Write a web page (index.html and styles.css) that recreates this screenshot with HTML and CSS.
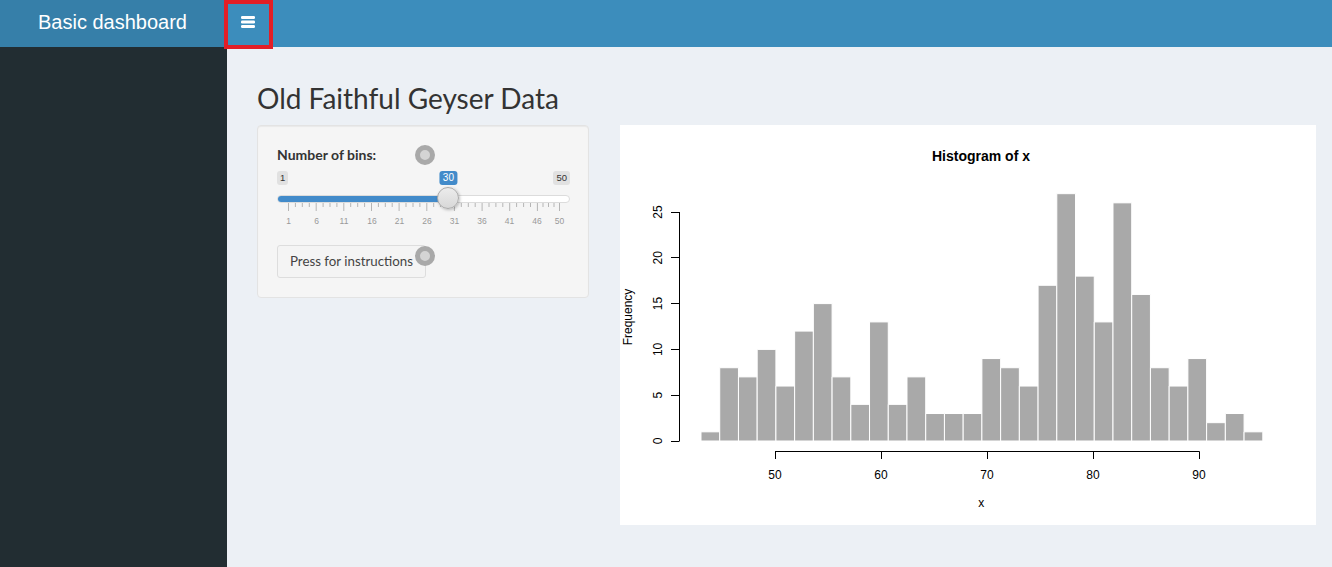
FILE: index.html
```html
<!DOCTYPE html>
<html lang="en">
<head>
<meta charset="utf-8">
<title>Basic dashboard</title>
<link rel="stylesheet" href="styles.css">
</head>
<body>
<div class="wrapper">
  <header class="main-header">
    <a class="logo" href="#">Basic dashboard</a>
    <nav class="navbar">
      <a class="sidebar-toggle" href="#" aria-label="Toggle navigation">
        <svg class="bars-icon" width="14" height="12" viewBox="0 0 14 12">
          <rect x="0" y="0" width="14" height="3" rx="1.2"/>
          <rect x="0" y="4.5" width="14" height="3" rx="1.2"/>
          <rect x="0" y="9" width="14" height="3" rx="1.2"/>
        </svg>
      </a>
    </nav>
    <span class="highlight-box"></span>
  </header>
  <div class="body-row">
    <aside class="main-sidebar"></aside>
    <main class="content-wrapper">
      <h2 class="page-title">Old Faithful Geyser Data</h2>
      <div class="row">
        <div class="well">
          <div class="form-group">
            <label class="control-label">Number of bins:</label>
            <div class="irs">
              <div class="irs-labels">
                <span class="irs-min">1</span>
                <span class="irs-max">50</span>
              </div>
              <span class="irs-single" style="left:171.4px">30</span>
              <div class="irs-line"><div class="irs-bar" style="width:171.4px"></div></div>
              <span class="irs-handle" style="left:160.4px"></span>
              <svg class="irs-grid" width="293" height="27" viewBox="0 0 293 27">
                <g class="grid-major">
                  <line x1="11.5" y1="0" x2="11.5" y2="8"/>
                  <line x1="39.2" y1="0" x2="39.2" y2="8"/>
                  <line x1="66.8" y1="0" x2="66.8" y2="8"/>
                  <line x1="94.5" y1="0" x2="94.5" y2="8"/>
                  <line x1="122.1" y1="0" x2="122.1" y2="8"/>
                  <line x1="149.8" y1="0" x2="149.8" y2="8"/>
                  <line x1="177.4" y1="0" x2="177.4" y2="8"/>
                  <line x1="205.1" y1="0" x2="205.1" y2="8"/>
                  <line x1="232.7" y1="0" x2="232.7" y2="8"/>
                  <line x1="260.4" y1="0" x2="260.4" y2="8"/>
                  <line x1="282.5" y1="0" x2="282.5" y2="8"/>
                </g>
                <g class="grid-minor">
                  <line x1="18.4" y1="0" x2="18.4" y2="4"/><line x1="25.3" y1="0" x2="25.3" y2="4"/><line x1="32.3" y1="0" x2="32.3" y2="4"/>
                  <line x1="46.1" y1="0" x2="46.1" y2="4"/><line x1="53" y1="0" x2="53" y2="4"/><line x1="59.9" y1="0" x2="59.9" y2="4"/>
                  <line x1="73.7" y1="0" x2="73.7" y2="4"/><line x1="80.7" y1="0" x2="80.7" y2="4"/><line x1="87.6" y1="0" x2="87.6" y2="4"/>
                  <line x1="101.4" y1="0" x2="101.4" y2="4"/><line x1="108.3" y1="0" x2="108.3" y2="4"/><line x1="115.2" y1="0" x2="115.2" y2="4"/>
                  <line x1="129" y1="0" x2="129" y2="4"/><line x1="136" y1="0" x2="136" y2="4"/><line x1="142.9" y1="0" x2="142.9" y2="4"/>
                  <line x1="156.7" y1="0" x2="156.7" y2="4"/><line x1="163.6" y1="0" x2="163.6" y2="4"/><line x1="170.5" y1="0" x2="170.5" y2="4"/>
                  <line x1="184.3" y1="0" x2="184.3" y2="4"/><line x1="191.3" y1="0" x2="191.3" y2="4"/><line x1="198.2" y1="0" x2="198.2" y2="4"/>
                  <line x1="212" y1="0" x2="212" y2="4"/><line x1="218.9" y1="0" x2="218.9" y2="4"/><line x1="225.8" y1="0" x2="225.8" y2="4"/>
                  <line x1="239.6" y1="0" x2="239.6" y2="4"/><line x1="246.6" y1="0" x2="246.6" y2="4"/><line x1="253.5" y1="0" x2="253.5" y2="4"/>
                  <line x1="266" y1="0" x2="266" y2="4"/><line x1="271.5" y1="0" x2="271.5" y2="4"/><line x1="277" y1="0" x2="277" y2="4"/>
                </g>
                <g class="grid-text">
                  <text x="11.5" y="21">1</text>
                  <text x="39.5" y="21">6</text>
                  <text x="67" y="21">11</text>
                  <text x="95" y="21">16</text>
                  <text x="122.5" y="21">21</text>
                  <text x="150" y="21">26</text>
                  <text x="177.5" y="21">31</text>
                  <text x="205" y="21">36</text>
                  <text x="232.5" y="21">41</text>
                  <text x="260" y="21">46</text>
                  <text x="282.5" y="21">50</text>
                </g>
              </svg>
            </div>
          </div>
          <button class="btn" type="button">Press for instructions</button>
          <span class="click-marker marker-a"></span>
          <span class="click-marker marker-b"></span>
        </div>
        <div class="plot-output">
          <svg class="hist" width="696" height="400" viewBox="0 0 696 400">
            <text class="plot-title" x="361" y="36">Histogram of x</text>
            <g class="bars" transform="translate(81,316) scale(10.6,-9.16)">
              <rect x="0" y="0" width="1.76667" height="1"/>
              <rect x="1.76667" y="0" width="1.76667" height="8"/>
              <rect x="3.53333" y="0" width="1.76667" height="7"/>
              <rect x="5.3" y="0" width="1.76667" height="10"/>
              <rect x="7.06667" y="0" width="1.76667" height="6"/>
              <rect x="8.83333" y="0" width="1.76667" height="12"/>
              <rect x="10.6" y="0" width="1.76667" height="15"/>
              <rect x="12.36667" y="0" width="1.76667" height="7"/>
              <rect x="14.13333" y="0" width="1.76667" height="4"/>
              <rect x="15.9" y="0" width="1.76667" height="13"/>
              <rect x="17.66667" y="0" width="1.76667" height="4"/>
              <rect x="19.43333" y="0" width="1.76667" height="7"/>
              <rect x="21.2" y="0" width="1.76667" height="3"/>
              <rect x="22.96667" y="0" width="1.76667" height="3"/>
              <rect x="24.73333" y="0" width="1.76667" height="3"/>
              <rect x="26.5" y="0" width="1.76667" height="9"/>
              <rect x="28.26667" y="0" width="1.76667" height="8"/>
              <rect x="30.03333" y="0" width="1.76667" height="6"/>
              <rect x="31.8" y="0" width="1.76667" height="17"/>
              <rect x="33.56667" y="0" width="1.76667" height="27"/>
              <rect x="35.33333" y="0" width="1.76667" height="18"/>
              <rect x="37.1" y="0" width="1.76667" height="13"/>
              <rect x="38.86667" y="0" width="1.76667" height="26"/>
              <rect x="40.63333" y="0" width="1.76667" height="16"/>
              <rect x="42.4" y="0" width="1.76667" height="8"/>
              <rect x="44.16667" y="0" width="1.76667" height="6"/>
              <rect x="45.93333" y="0" width="1.76667" height="9"/>
              <rect x="47.7" y="0" width="1.76667" height="2"/>
              <rect x="49.46667" y="0" width="1.76667" height="3"/>
              <rect x="51.23333" y="0" width="1.76667" height="1"/>
            </g>
            <g class="axis">
              <line x1="59.5" y1="316" x2="59.5" y2="87"/>
              <line x1="51" y1="316.5" x2="59.5" y2="316.5"/>
              <line x1="51" y1="270.5" x2="59.5" y2="270.5"/>
              <line x1="51" y1="224.5" x2="59.5" y2="224.5"/>
              <line x1="51" y1="178.5" x2="59.5" y2="178.5"/>
              <line x1="51" y1="132.5" x2="59.5" y2="132.5"/>
              <line x1="51" y1="87.5" x2="59.5" y2="87.5"/>
              <line x1="155" y1="326.5" x2="579.5" y2="326.5"/>
              <line x1="155.5" y1="326.5" x2="155.5" y2="334"/>
              <line x1="261.5" y1="326.5" x2="261.5" y2="334"/>
              <line x1="367.5" y1="326.5" x2="367.5" y2="334"/>
              <line x1="473.5" y1="326.5" x2="473.5" y2="334"/>
              <line x1="579.5" y1="326.5" x2="579.5" y2="334"/>
            </g>
            <g class="tick-text">
              <text transform="translate(42,316) rotate(-90)">0</text>
              <text transform="translate(42,270.2) rotate(-90)">5</text>
              <text transform="translate(42,224.4) rotate(-90)">10</text>
              <text transform="translate(42,178.6) rotate(-90)">15</text>
              <text transform="translate(42,132.8) rotate(-90)">20</text>
              <text transform="translate(42,87) rotate(-90)">25</text>
              <text x="155" y="353.5">50</text>
              <text x="261" y="353.5">60</text>
              <text x="367" y="353.5">70</text>
              <text x="473" y="353.5">80</text>
              <text x="579" y="353.5">90</text>
              <text x="361.3" y="382">x</text>
              <text transform="translate(12,192) rotate(-90)">Frequency</text>
            </g>
          </svg>
        </div>
      </div>
    </main>
  </div>
</div>
</body>
</html>
```
FILE: styles.css
```css
* { box-sizing: border-box; }

html, body {
  margin: 0;
  padding: 0;
  height: 100%;
}

body {
  font-family: Lato, "Noto Sans", sans-serif;
  color: #333;
  background: #ecf0f5;
  overflow: hidden;
}

.wrapper {
  display: flex;
  flex-direction: column;
  height: 567px;
}

.main-header {
  position: relative;
  display: flex;
  height: 47px;
  flex: none;
}

.logo {
  width: 227px;
  flex: none;
  background: #367fa9;
  color: #fff;
  font-family: "Liberation Sans", Arial, sans-serif;
  font-size: 20px;
  line-height: 44px;
  text-align: center;
  text-decoration: none;
  padding-right: 2px;
}

.navbar {
  flex: 1;
  display: flex;
  background: #3c8dbc;
}

.sidebar-toggle {
  display: flex;
  align-items: center;
  padding: 0 14px 0 14px;
  height: 46px;
}

.bars-icon {
  display: block;
  fill: #fff;
  margin-top: -3px;
}

.highlight-box {
  position: absolute;
  left: 224px;
  top: 0;
  width: 49px;
  height: 49px;
  border: 4px solid #e31e26;
  z-index: 3;
}

.body-row {
  flex: 1;
  display: flex;
  min-height: 0;
}

.main-sidebar {
  width: 227px;
  flex: none;
  background: #222d32;
}

.content-wrapper {
  flex: 1;
  background: #ecf0f5;
  padding: 34px 16px 0 30px;
}

.page-title {
  margin: 0 0 10px;
  font-weight: 400;
  font-size: 28px;
  line-height: 34px;
  color: #333;
}

.row {
  display: flex;
  align-items: flex-start;
  gap: 31px;
}

.well {
  position: relative;
  width: 332px;
  flex: none;
  padding: 19px;
  background: #f5f5f5;
  border: 1px solid #e3e3e3;
  border-radius: 4px;
  box-shadow: inset 0 1px 1px rgba(0, 0, 0, 0.05);
}

.form-group {
  margin-bottom: 15px;
}

.control-label {
  display: block;
  font-weight: 700;
  font-size: 14px;
  line-height: 20px;
  margin-bottom: 5px;
  color: #333;
}

.irs {
  position: relative;
  width: 293px;
}

.irs-labels {
  display: flex;
  justify-content: space-between;
  padding-top: 1px;
}

.irs-min,
.irs-max,
.irs-single {
  display: block;
  font-family: "Liberation Sans", Arial, sans-serif;
  font-size: 9.5px;
  line-height: 14px;
  height: 14px;
  padding: 0 3px;
  border-radius: 3px;
  background: #e1e1e1;
  color: #333;
}

.irs-single {
  position: absolute;
  top: 1px;
  transform: translateX(-50%);
  background: #428bca;
  color: #fff;
  font-size: 10px;
  padding: 0 3px;
}

.irs-line {
  margin-top: 10px;
  height: 8px;
  border-radius: 4px;
  background: #fff;
  border: 1px solid #dcdcdc;
  overflow: hidden;
}

.irs-bar {
  background: #428bca;
  margin: -1px 0 0 -1px;
  height: 8px;
}

.irs-handle {
  position: absolute;
  top: 17px;
  width: 22px;
  height: 22px;
  border-radius: 50%;
  border: 1px solid #aaa;
  background: linear-gradient(to bottom, #ececec 0%, #d8d8d8 100%);
  box-shadow: 1px 1px 3px rgba(0, 0, 0, 0.25);
  z-index: 2;
}

.irs-grid {
  display: block;
}

.grid-major line,
.grid-minor line {
  stroke: #b5b5b5;
  stroke-width: 1;
}

.grid-text text {
  font-family: "Liberation Sans", Arial, sans-serif;
  font-size: 8.5px;
  fill: #999;
  text-anchor: middle;
}

.btn {
  display: block;
  font-family: Lato, "Noto Sans", sans-serif;
  font-size: 13.3px;
  line-height: 19px;
  padding: 6px 12px;
  width: 149px;
  text-align: left;
  white-space: nowrap;
  color: #444;
  background: #f4f4f4;
  border: 1px solid #ddd;
  border-radius: 3px;
}

.click-marker {
  position: absolute;
  left: 157px;
  width: 20px;
  height: 20px;
  border-radius: 50%;
  background: #d4d4d4;
  border: 5px solid #a9a9a9;
  z-index: 4;
}

.marker-a { top: 19px; }
.marker-b { top: 120px; }

.plot-output {
  width: 696px;
  height: 400px;
  flex: none;
  background: #fff;
}

.hist {
  display: block;
  font-family: "Liberation Sans", Arial, sans-serif;
}

.plot-title {
  font-size: 14px;
  font-weight: 700;
  text-anchor: middle;
  fill: #000;
}

.bars rect {
  fill: #a9a9a9;
  stroke: #fff;
  stroke-width: 1;
  vector-effect: non-scaling-stroke;
}

.axis line {
  stroke: #000;
  stroke-width: 1;
}

.tick-text text {
  font-size: 12px;
  text-anchor: middle;
  fill: #000;
}
```
